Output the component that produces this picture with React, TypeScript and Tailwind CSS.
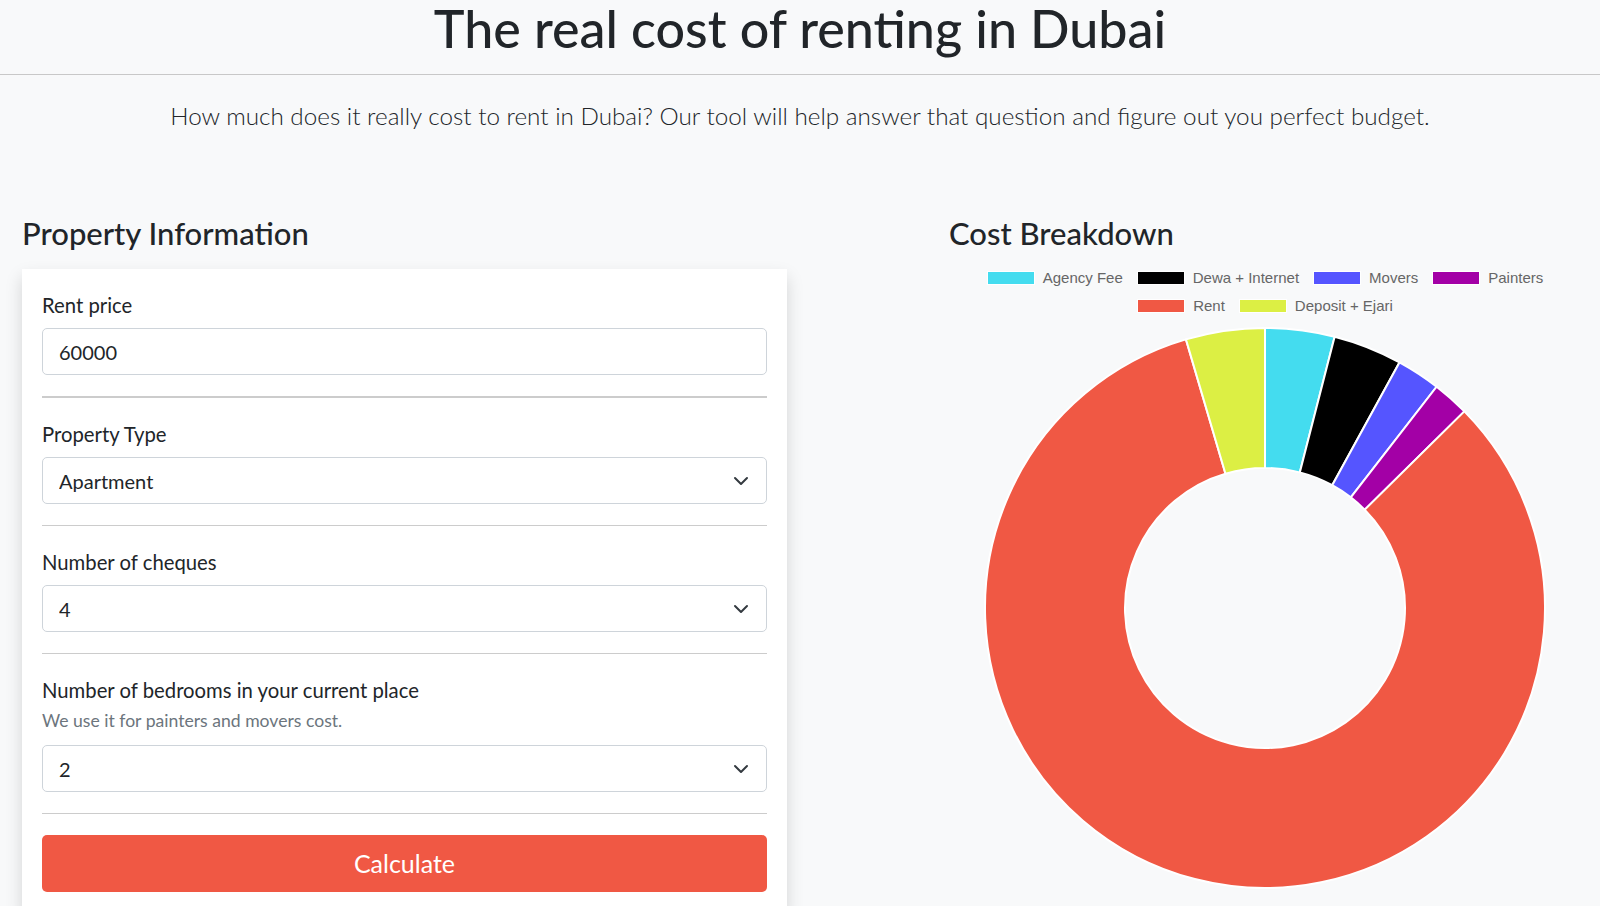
import React, { useState } from 'react';

type Slice = { label: string; value: number; color: string };

// angles measured in degrees, rent takes the rest
const slices: Slice[] = [
  { label: 'Agency Fee', value: 14.4, color: '#44dcef' },
  { label: 'Dewa + Internet', value: 14.3, color: '#000000' },
  { label: 'Movers', value: 9.1, color: '#5555ff' },
  { label: 'Painters', value: 7.6, color: '#a300a6' },
  { label: 'Rent', value: 298.2, color: '#f05844' },
  { label: 'Deposit + Ejari', value: 16.4, color: '#dcef44' },
];

const pt = (cx: number, cy: number, r: number, a: number) => {
  const rad = (a * Math.PI) / 180;
  return [cx + r * Math.sin(rad), cy - r * Math.cos(rad)];
};

function arcPath(cx: number, cy: number, r0: number, r1: number, a0: number, a1: number) {
  const large = a1 - a0 > 180 ? 1 : 0;
  const [x0, y0] = pt(cx, cy, r1, a0);
  const [x1, y1] = pt(cx, cy, r1, a1);
  const [x2, y2] = pt(cx, cy, r0, a1);
  const [x3, y3] = pt(cx, cy, r0, a0);
  return `M${x0} ${y0} A${r1} ${r1} 0 ${large} 1 ${x1} ${y1} L${x2} ${y2} A${r0} ${r0} 0 ${large} 0 ${x3} ${y3} Z`;
}

function Donut() {
  const total = slices.reduce((s, x) => s + x.value, 0);
  let acc = 0;
  return (
    <svg width="562" height="562" viewBox="0 0 562 562">
      {slices.map((s) => {
        const a0 = (acc / total) * 360;
        acc += s.value;
        const a1 = (acc / total) * 360;
        return (
          <path
            key={s.label}
            d={arcPath(281, 281, 140, 280, a0, a1)}
            fill={s.color}
            stroke="#ffffff"
            strokeWidth={2}
          />
        );
      })}
    </svg>
  );
}

function LegendItem({ s }: { s: Slice }) {
  return (
    <div className="flex items-center">
      <span
        className="w-[48px] h-[14px] border border-white"
        style={{ backgroundColor: s.color }}
      />
      <span className="ml-[8px] text-[15px] leading-[20px] text-[#666666] font-['Liberation_Sans',Arial,sans-serif]">
        {s.label}
      </span>
    </div>
  );
}

function Chevron() {
  return (
    <svg
      className="pointer-events-none absolute right-[18px] top-1/2 -translate-y-1/2"
      width="16"
      height="12"
      viewBox="0 2 16 12"
    >
      <path d="M2 5l6 6 6-6" fill="none" stroke="#343a40" strokeWidth="2" strokeLinecap="round" strokeLinejoin="round" />
    </svg>
  );
}

function SelectField({
  value,
  options,
  onChange,
}: {
  value: string;
  options: string[];
  onChange: (v: string) => void;
}) {
  return (
    <div className="relative">
      <select
        value={value}
        onChange={(e) => onChange(e.target.value)}
        className="appearance-none w-full h-[47px] pl-4 pr-12 bg-white border border-[#ced4da] rounded-[5px] text-[20px] text-[#212529] outline-none"
      >
        {options.map((o) => (
          <option key={o} value={o}>
            {o}
          </option>
        ))}
      </select>
      <Chevron />
    </div>
  );
}

const Divider = ({ thick }: { thick?: boolean }) => (
  <div className={`my-[21px] ${thick ? 'h-[2px]' : 'h-px'} bg-[#cccccc]`} />
);

export default function App() {
  const [rent, setRent] = useState('60000');
  const [type, setType] = useState('Apartment');
  const [cheques, setCheques] = useState('4');
  const [bedrooms, setBedrooms] = useState('2');

  return (
    <div className="min-h-screen bg-[#f8f9fa] text-[#212529] font-['Lato','Open_Sans',sans-serif]">
      <header className="h-[75px] border-b border-[#c8c8c8] text-center">
        <h1 className="text-[52px] leading-[57px] font-medium">The real cost of renting in Dubai</h1>
      </header>

      <p className="mt-[23px] text-center text-[24.25px] leading-[36px] font-light">
        How much does it really cost to rent in Dubai? Our tool will help answer that question and figure out you perfect budget.
      </p>

      <div className="flex mt-[81px] pl-[22px]">
        <div className="w-[765px]">
          <h3 className="text-[31px] leading-[36px] font-medium mb-[18px]">Property Information</h3>

          <div className="bg-white shadow-[0_8px_16px_rgba(0,0,0,0.15)] px-5 pt-[21px] pb-5">
            <label className="block text-[20.3px] leading-[30px] mb-2">Rent price</label>
            <input
              value={rent}
              onChange={(e) => setRent(e.target.value)}
              className="w-full h-[47px] px-4 bg-white border border-[#ced4da] rounded-[5px] text-[20px] outline-none"
            />
            <Divider thick />

            <label className="block text-[20.3px] leading-[30px] mb-2">Property Type</label>
            <SelectField value={type} options={['Apartment', 'Villa', 'Townhouse']} onChange={setType} />
            <Divider />

            <label className="block text-[20.3px] leading-[30px] mb-2">Number of cheques</label>
            <SelectField value={cheques} options={['1', '2', '4', '6', '12']} onChange={setCheques} />
            <Divider />

            <label className="block text-[20.3px] leading-[30px]">Number of bedrooms in your current place</label>
            <div className="mt-1 mb-3 text-[17.6px] leading-[24px] text-[#6c757d]">
              We use it for painters and movers cost.
            </div>
            <SelectField value={bedrooms} options={['1', '2', '3', '4', '5']} onChange={setBedrooms} />
            <Divider />

            <button className="w-full h-[57px] bg-[#f05844] text-white rounded-[5px] text-[25px]">
              Calculate
            </button>
          </div>
        </div>

        <div className="ml-[162px] w-[632px]">
          <h3 className="text-[31px] leading-[36px] font-medium">Cost Breakdown</h3>
          <div className="mt-[17px] flex flex-col items-center gap-[8px]">
            <div className="flex gap-[14px]">
              {slices.slice(0, 4).map((s) => (
                <LegendItem key={s.label} s={s} />
              ))}
            </div>
            <div className="flex gap-[14px]">
              {slices.slice(4).map((s) => (
                <LegendItem key={s.label} s={s} />
              ))}
            </div>
          </div>
          <div className="mt-[11px] flex justify-center">
            <Donut />
          </div>
        </div>
      </div>
    </div>
  );
}
